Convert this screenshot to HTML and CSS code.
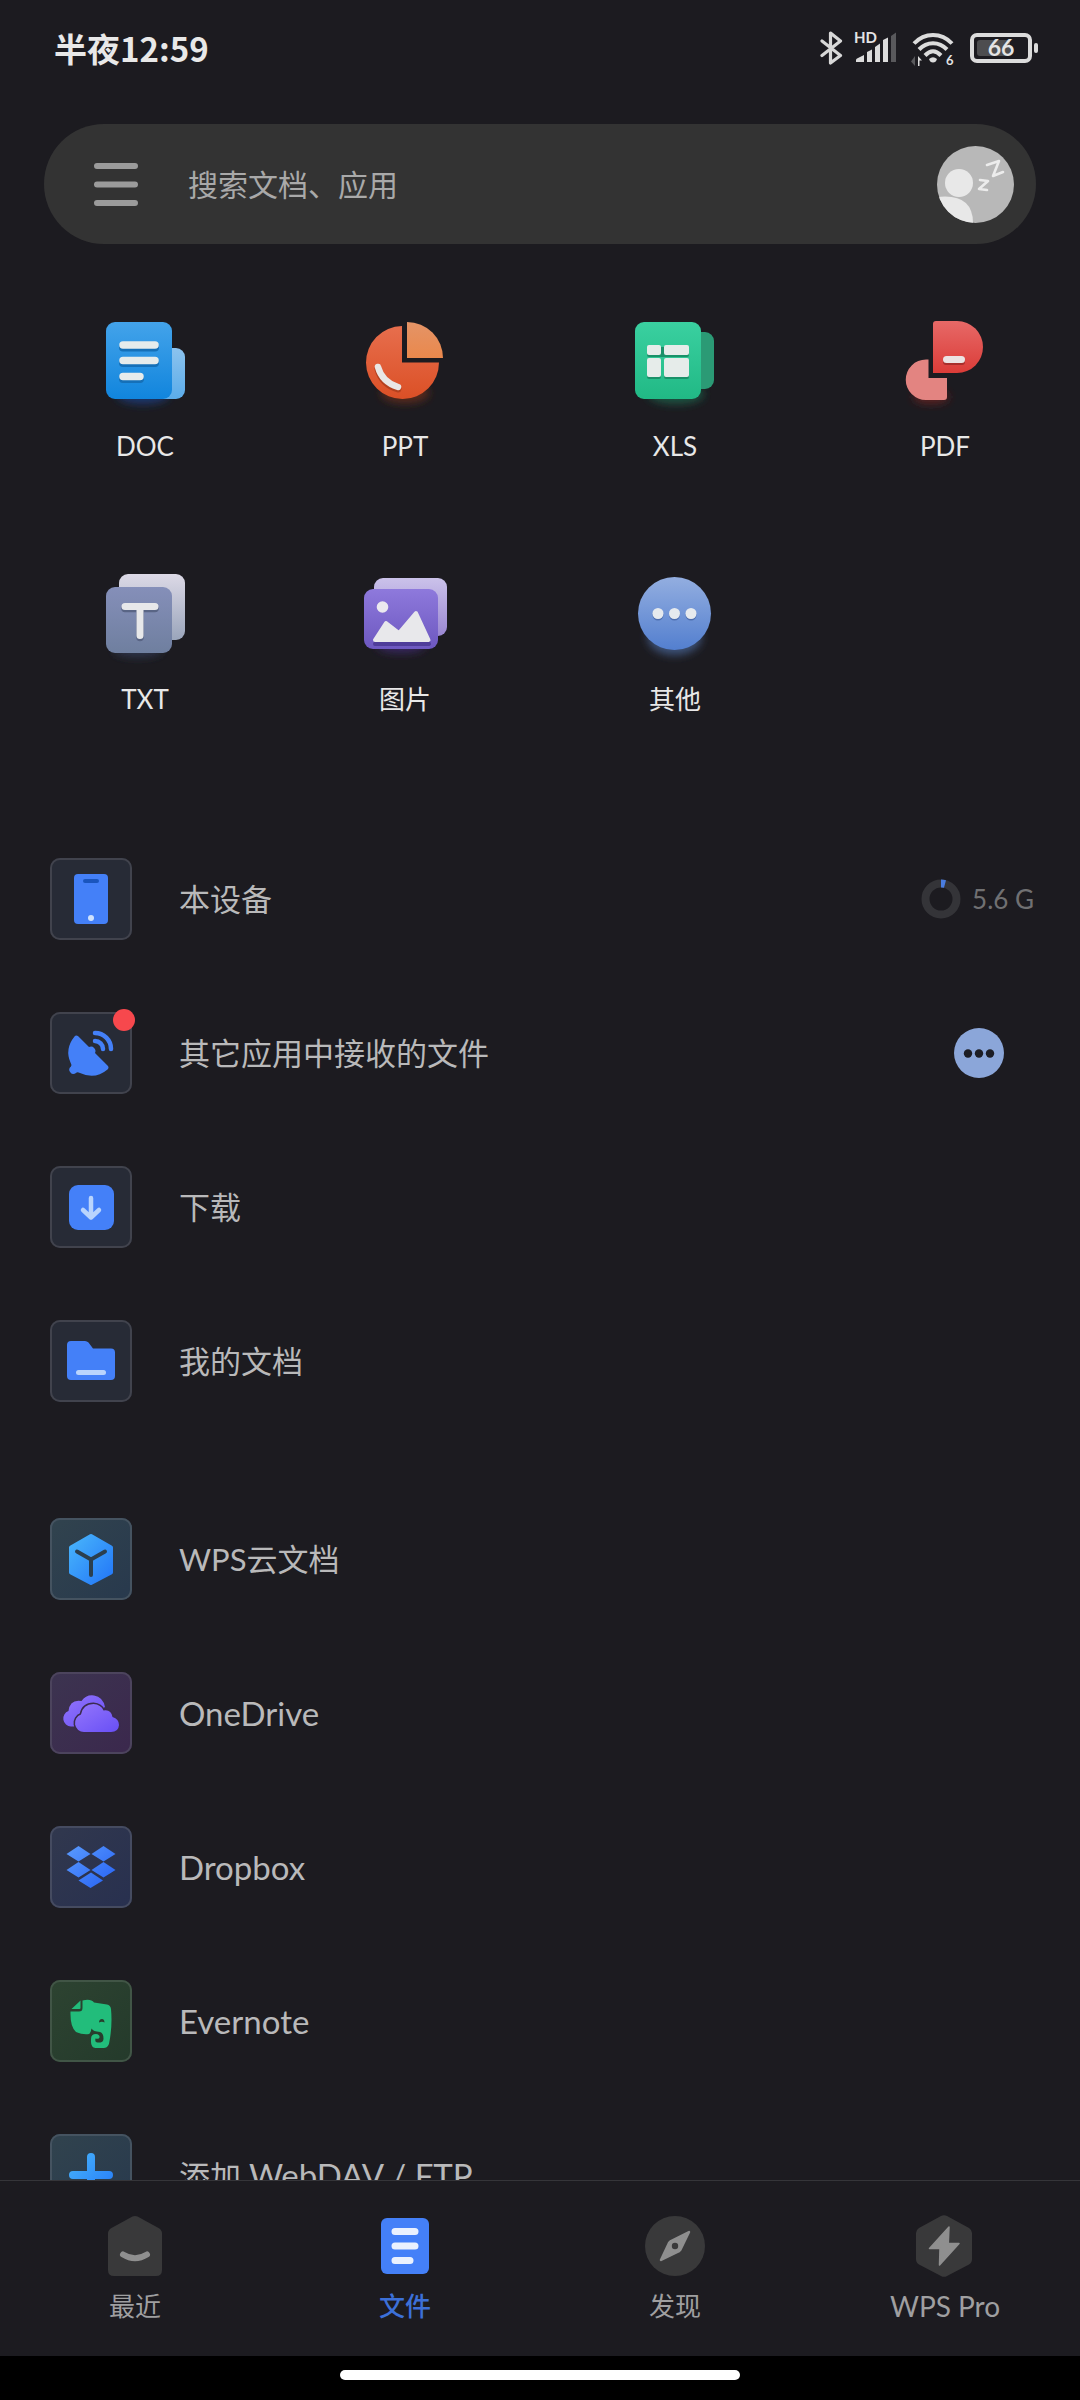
FILE: index.html
```html
<!DOCTYPE html>
<html lang="zh-CN">
<head>
<meta charset="utf-8">
<meta name="viewport" content="width=device-width, initial-scale=1">
<title>文件</title>
<link rel="stylesheet" href="styles.css">
</head>
<body>
<!-- 状态栏 -->
<header class="status">
  <span class="time">半夜12:59</span>
  <div class="status-icons">
    <svg class="bt" width="24" height="40" viewBox="0 0 24 40"><path d="M2 13 20.500 27.500 10.500 35V5L20.500 13 2 27.500" fill="none" stroke="#d8d8d8" stroke-width="3.200" stroke-linejoin="round" stroke-linecap="round"/></svg>
    <svg class="signal" width="46" height="40" viewBox="0 0 46 40">
      <path d="M4 34V32Q4 31 5 30.500L12 27V34zM15 34V24L20 21.500V34zM23 34V19L28 15.500V34zM31 34V12L36 9.500V34z" fill="#dcdcdc"/>
      <path d="M39 34V8L44 4.500V34z" fill="#59595c"/>
      <text x="2" y="15" font-size="15" class="svg-bold">HD</text>
    </svg>
    <svg class="wifi" width="46" height="40" viewBox="0 0 46 40">
      <g fill="none" stroke="#dcdcdc" stroke-width="4">
        <path d="M4 15.500Q12 7 23 7T42 15.500"/><path d="M9 21.500Q15 15.200 23 15.200T37 21.500"/><path d="M15 27.500Q19 23.300 23 23.300T31 27.500"/>
      </g>
      <path d="M19 31Q23 27.500 27 31Q26 34.500 23 34.500T19 31z" fill="#dcdcdc"/>
      <path d="M5 28V38L1 33.500" fill="#59595c"/><path d="M8 38V28L12 32.500H9.500V38z" fill="#dcdcdc"/>
      <text x="36" y="37" font-size="13" class="svg-bold">6</text>
    </svg>
    <svg class="battery" width="72" height="40" viewBox="0 0 72 40">
      <rect x="4" y="7" width="58" height="26" rx="5" fill="none" stroke="#dcdcdc" stroke-width="4"/>
      <rect x="9" y="12" width="33" height="16" rx="3" fill="#4d4d4f"/>
      <rect x="66" y="15" width="4" height="10" rx="2" fill="#dcdcdc"/>
      <text x="33" y="28" font-size="23" text-anchor="middle" class="svg-bold">66</text>
    </svg>
  </div>
</header>

<main class="page">
  <!-- 搜索 -->
  <form class="search">
    <button type="button" class="menu" aria-label="菜单">
      <svg width="48" height="48" viewBox="0 0 48 48"><path d="M5 6H43M5 24.500H43M5 43H43" stroke="#9b9b9b" stroke-width="6" stroke-linecap="round"/></svg>
    </button>
    <input type="search" aria-label="搜索" placeholder="搜索文档、应用">
    <button type="button" class="avatar" aria-label="账号">
      <svg width="77" height="77" viewBox="0 0 77 77">
        <defs><clipPath id="av"><circle cx="38.500" cy="38.500" r="38.500"/></clipPath></defs>
        <g clip-path="url(#av)">
          <rect width="77" height="77" fill="#b8b8b8"/>
          <circle cx="22" cy="37" r="14" fill="#e8e8e8"/>
          <path d="M0 51Q36 47 36 77H0z" fill="#e8e8e8"/>
          <path d="M50 19 62 15 56 30 66 26M43 34 51 35 42 43 50 44" fill="none" stroke="#ececec" stroke-width="2.600" stroke-linejoin="round" stroke-linecap="round"/>
        </g>
      </svg>
    </button>
  </form>

  <!-- 文件类型 -->
  <nav class="types">
    <a href="#">
      <svg width="100" height="100" viewBox="0 0 100 100">
        <defs>
          <filter id="glow" x="-50%" y="-50%" width="200%" height="200%"><feGaussianBlur stdDeviation="4"/></filter>
          <linearGradient id="doc" x1="0" y1="0" x2="0" y2="1"><stop offset="0" stop-color="#43a3ea"/><stop offset="1" stop-color="#1185dd"/></linearGradient>
          <linearGradient id="doc2" x1="0" y1="0" x2="0" y2="1"><stop offset="0" stop-color="#8cc3ee"/><stop offset="1" stop-color="#5bacea"/></linearGradient>
        </defs>
        <ellipse cx="48" cy="79" rx="26" ry="9" fill="#1b3970" filter="url(#glow)"/>
        <rect x="58" y="32" width="32" height="51" rx="9" fill="url(#doc2)"/>
        <rect x="11" y="6" width="66" height="77" rx="9" fill="url(#doc)"/>
        <path d="M28 30H60M28 45.500H60M28 61.500H45" transform="translate(0 1.500)" stroke="#1570b8" stroke-width="8" stroke-linecap="round"/>
        <path d="M28 29H60M28 44.500H60M28 60.500H45" stroke="#e6ecec" stroke-width="7.500" stroke-linecap="round"/>
      </svg>
      <span>DOC</span>
    </a>
    <a href="#">
      <svg width="100" height="100" viewBox="0 0 100 100">
        <defs>
          <linearGradient id="ppt" x1="0" y1="0" x2="0" y2="1"><stop offset="0" stop-color="#e76e4d"/><stop offset="1" stop-color="#db5026"/></linearGradient>
          <linearGradient id="ppt2" x1="0" y1="0" x2="0" y2="1"><stop offset="0" stop-color="#e49467"/><stop offset="1" stop-color="#ea884c"/></linearGradient>
        </defs>
        <ellipse cx="50" cy="77" rx="24" ry="10" fill="#5c2a1e" filter="url(#glow)"/>
        <path d="M47 46.500V10A36.500 36.500 0 1 0 84 46.500z" fill="url(#ppt)"/>
        <path d="M52 6A36 36 0 0 1 88 42H52z" fill="url(#ppt2)"/>
        <path d="M23 51Q27 66 43 71" transform="translate(0 2)" fill="none" stroke="#b4411f" stroke-width="7" stroke-linecap="round"/>
        <path d="M23 51Q27 66 43 71" fill="none" stroke="#e9e7e5" stroke-width="6.500" stroke-linecap="round"/>
      </svg>
      <span>PPT</span>
    </a>
    <a href="#">
      <svg width="100" height="100" viewBox="0 0 100 100">
        <defs><linearGradient id="xls" x1="0" y1="0" x2="0" y2="1"><stop offset="0" stop-color="#3ad0a0"/><stop offset="1" stop-color="#21b985"/></linearGradient></defs>
        <ellipse cx="51" cy="78" rx="28" ry="10" fill="#1d5543" filter="url(#glow)"/>
        <rect x="58" y="16" width="31" height="57" rx="9" fill="#2b9a75"/>
        <rect x="10" y="6" width="66" height="77" rx="9" fill="url(#xls)"/>
        <g fill="#1a9169"><rect x="22" y="43" width="14" height="20" rx="2"/><rect x="39" y="43" width="25" height="20" rx="2"/><rect x="22" y="31" width="42" height="10" rx="2"/></g>
        <g fill="#e6ecea"><rect x="22" y="29" width="14" height="10" rx="2"/><rect x="39" y="29" width="25" height="10" rx="2"/><rect x="22" y="42" width="14" height="19" rx="2"/><rect x="39" y="42" width="25" height="19" rx="2"/></g>
      </svg>
      <span>XLS</span>
    </a>
    <a href="#">
      <svg width="100" height="100" viewBox="0 0 100 100">
        <defs><linearGradient id="pdf" x1="0" y1="0" x2="0" y2="1"><stop offset="0" stop-color="#e76967"/><stop offset="1" stop-color="#db3c38"/></linearGradient></defs>
        <ellipse cx="36" cy="81" rx="18" ry="7" fill="#5c2022" filter="url(#glow)"/>
        <path d="M33.500 43.500V62H52V81Q52 84 49 84H31A20.200 20.200 0 0 1 31 43.500z" fill="#e38481"/>
        <path d="M41 5H62A26 26 0 0 1 62 57H38V8Q38 5 41 5z" fill="url(#pdf)"/>
        <rect x="48" y="42" width="22" height="7" rx="3" fill="#a92e2b"/>
        <rect x="48" y="40" width="22" height="7" rx="3.500" fill="#ece3e3"/>
      </svg>
      <span>PDF</span>
    </a>
    <a href="#">
      <svg width="100" height="100" viewBox="0 0 100 100">
        <defs>
          <linearGradient id="txt" x1="0" y1="0" x2="0" y2="1"><stop offset="0" stop-color="#858fb9"/><stop offset="1" stop-color="#6f7f9f"/></linearGradient>
          <linearGradient id="txt2" x1="0" y1="0" x2="0" y2="1"><stop offset="0" stop-color="#dcd9e6"/><stop offset="1" stop-color="#9aa5bb"/></linearGradient>
        </defs>
        <ellipse cx="43" cy="81" rx="24" ry="7" fill="#2d344c" filter="url(#glow)"/>
        <rect x="24" y="5" width="66" height="66" rx="9" fill="url(#txt2)"/>
        <rect x="11" y="18" width="66" height="66" rx="9" fill="url(#txt)"/>
        <path d="M30 39.500H60M45 39.500V68.500" stroke="#596585" stroke-width="7.500" stroke-linecap="round"/>
        <path d="M30 37.500H60M45 37.500V66.500" stroke="#e7e8ea" stroke-width="7" stroke-linecap="round"/>
      </svg>
      <span>TXT</span>
    </a>
    <a href="#">
      <svg width="100" height="100" viewBox="0 0 100 100">
        <defs>
          <linearGradient id="pic" x1="0" y1="0" x2="0" y2="1"><stop offset="0" stop-color="#8e79dc"/><stop offset="1" stop-color="#6d58c0"/></linearGradient>
          <linearGradient id="pic2" x1="0" y1="0" x2="0" y2="1"><stop offset="0" stop-color="#cbc2ea"/><stop offset="1" stop-color="#9a87d2"/></linearGradient>
        </defs>
        <ellipse cx="46" cy="77" rx="24" ry="7" fill="#37265f" filter="url(#glow)"/>
        <rect x="19" y="9" width="73" height="58" rx="9" fill="url(#pic2)"/>
        <rect x="9" y="20" width="74" height="60" rx="9" fill="url(#pic)"/>
        <path d="M20 73 31 54 44 65 61 45 74 73z" transform="translate(0 2)" fill="#4f3d9a" stroke="#4f3d9a" stroke-width="4" stroke-linejoin="round"/>
        <circle cx="27.500" cy="38" r="5.800" fill="#ebe9ef"/>
        <path d="M20 71 31 54 44 64 61 44 73.500 71z" fill="#e8e8eb" stroke="#e8e8eb" stroke-width="4" stroke-linejoin="round"/>
      </svg>
      <span>图片</span>
    </a>
    <a href="#">
      <svg width="100" height="100" viewBox="0 0 100 100">
        <defs><linearGradient id="other" x1="0" y1="0" x2="0" y2="1"><stop offset="0" stop-color="#93aee0"/><stop offset="1" stop-color="#537fcf"/></linearGradient></defs>
        <ellipse cx="49.500" cy="68" rx="27" ry="18" fill="#3e5279" filter="url(#glow)"/>
        <circle cx="49.500" cy="44.500" r="36.500" fill="url(#other)"/>
        <g fill="#4e6fb0"><circle cx="33" cy="46" r="5.500"/><circle cx="49.500" cy="46" r="5.500"/><circle cx="66" cy="46" r="5.500"/></g>
        <g fill="#e6eaee"><circle cx="33" cy="44.500" r="5.500"/><circle cx="49.500" cy="44.500" r="5.500"/><circle cx="66" cy="44.500" r="5.500"/></g>
      </svg>
      <span>其他</span>
    </a>
  </nav>

  <!-- 本地位置 -->
  <ul class="list">
    <li>
      <a href="#">
        <span class="tile"><svg viewBox="0 0 82 82"><rect x="24" y="16" width="34" height="50" rx="4" fill="#4480f8"/><rect x="33" y="21" width="16" height="4" rx="2" fill="#1a55bd"/><circle cx="41" cy="60" r="3" fill="#cfe2fd"/></svg></span>
        <span class="name">本设备</span>
      </a>
      <span class="storage">
        <svg width="40" height="40" viewBox="0 0 40 40"><circle cx="20" cy="20" r="15.500" fill="none" stroke="#343438" stroke-width="8"/><path d="M20 4.500A15.500 15.500 0 0 1 24 5" fill="none" stroke="#4a7de0" stroke-width="8"/></svg>
        5.6 G
      </span>
    </li>
    <li>
      <a href="#">
        <span class="tile">
          <svg viewBox="0 0 82 82">
            <path d="M24.500 24.500Q26 22.500 28.500 24.500L39 35A4.500 4.500 0 0 1 45 41L57.500 53.500Q59.500 55.500 57.500 57.500Q45 68 30 61Q27 59.500 26 61A4 4 0 1 1 21 54.500Q22 53 20.500 50.500Q14.500 37 24.500 24.500z" fill="#4480f8"/>
            <path d="M45 21A16 16 0 0 1 61 37M45 29A8 8 0 0 1 53 37" fill="none" stroke="#4480f8" stroke-width="4.500" stroke-linecap="round"/>
          </svg>
          <i class="badge"></i>
        </span>
        <span class="name">其它应用中接收的文件</span>
      </a>
      <button type="button" class="more" aria-label="更多">
        <svg width="50" height="50" viewBox="0 0 50 50"><circle cx="25" cy="25" r="25" fill="#8ba6d9"/><g fill="#1c1d24"><circle cx="14" cy="25.500" r="4.200"/><circle cx="25" cy="25.500" r="4.200"/><circle cx="36" cy="25.500" r="4.200"/></g></svg>
      </button>
    </li>
    <li>
      <a href="#">
        <span class="tile"><svg viewBox="0 0 82 82"><rect x="19" y="19" width="45" height="45" rx="9" fill="#4480f8"/><path d="M41 32V51M33 44 41 51.500 49 44" fill="none" stroke="#b9d4fd" stroke-width="4.500" stroke-linecap="round" stroke-linejoin="round"/></svg></span>
        <span class="name">下载</span>
      </a>
    </li>
    <li>
      <a href="#">
        <span class="tile"><svg viewBox="0 0 82 82"><path d="M21 21H35Q37 21 38.500 22.500L43 28.500H61Q65 28.500 65 32.500V56Q65 60 61 60H21Q17 60 17 56V25Q17 21 21 21z" fill="#4480f8"/><rect x="26" y="50" width="30" height="5" rx="2.500" fill="#b9d4fd"/></svg></span>
        <span class="name">我的文档</span>
      </a>
    </li>
  </ul>

  <!-- 云存储 -->
  <ul class="list cloud">
    <li>
      <a href="#">
        <span class="tile teal">
          <svg viewBox="0 0 82 82">
            <defs><linearGradient id="sky" x1="0" y1="0" x2="1" y2="1"><stop offset="0" stop-color="#48b5fb"/><stop offset="1" stop-color="#2377f8"/></linearGradient></defs>
            <path d="M41 18 61 29.500V54.500L41 65 21 54.500V29.500z" fill="url(#sky)" stroke="url(#sky)" stroke-width="4" stroke-linejoin="round"/>
            <path d="M27 33.500 41 41.500 55 33.500M41 41.500V57" fill="none" stroke="#2b3f4e" stroke-width="4" stroke-linecap="round"/>
          </svg>
        </span>
        <span class="name">WPS云文档</span>
      </a>
    </li>
    <li>
      <a href="#">
        <span class="tile purple">
          <svg viewBox="0 0 82 82">
            <defs><linearGradient id="one" x1="0" y1="0" x2="1" y2="1"><stop offset="0" stop-color="#9476fb"/><stop offset="1" stop-color="#684ff6"/></linearGradient></defs>
            <path d="M21 54.500A8 8 0 0 1 18.500 39Q20 27 31.500 29Q36 22.500 44 23.500Q53 25 55 35L36 48 24 54.500z" fill="url(#one)"/>
            <path d="M34 60A9 9 0 0 1 31 42.500Q33 32 43.500 32Q51 32.500 53.500 38.500Q61 37 62.500 45Q69 47 69 53Q68.500 60 61 60z" fill="url(#one)" stroke="#3b2b4e" stroke-width="3" paint-order="stroke"/>
          </svg>
        </span>
        <span class="name latin">OneDrive</span>
      </a>
    </li>
    <li>
      <a href="#">
        <span class="tile navy">
          <svg viewBox="0 0 82 82">
            <defs><linearGradient id="drop" gradientUnits="userSpaceOnUse" x1="20" y1="20" x2="56" y2="62"><stop offset="0" stop-color="#5898fd"/><stop offset="1" stop-color="#2a66f5"/></linearGradient></defs>
            <path d="M28.500 20 40.500 28 28.500 35.500 16.500 28zM53.500 20 65.500 28 53.500 35.500 41.500 28zM28.500 36 40.500 44 28.500 51.500 16.500 44zM53.500 36 65.500 44 53.500 51.500 41.500 44zM41 46.500 53 54.500 40.500 62 28.500 54.500z" fill="url(#drop)"/>
          </svg>
        </span>
        <span class="name latin">Dropbox</span>
      </a>
    </li>
    <li>
      <a href="#">
        <span class="tile green">
          <svg viewBox="0 0 82 82">
            <path d="M21.500 29 30.500 20.500V28Q30.500 29 29.500 29z" fill="#22bd7b"/>
            <path d="M32.500 20.500Q41 18.500 44 22.500L57 24.500Q60.500 25 61 29Q62.500 45 59.500 61Q59 67.500 54 68H45.500Q41 67.500 41 62V59Q41 54 46 54Q50 54.500 49.500 57.500Q49 59.500 45.500 58.500Q44.500 62.500 47.500 62.500H50.500Q53.500 62 53.500 58.500Q53.500 53 50 52Q43 51.500 41.500 48.500Q41 52.500 39 54Q33 55 26 52Q20 47 20.500 31.500H29Q32.500 31.500 32.500 28z" fill="#22bd7b"/>
            <path d="M49 42.500Q49 39 52 39Q54.500 39 54.500 42.500Q52 41 49 42.500z" fill="#27402d"/>
          </svg>
        </span>
        <span class="name latin">Evernote</span>
      </a>
    </li>
    <li>
      <a href="#">
        <span class="tile teal"><svg viewBox="0 0 82 82"><path d="M37 23A4 4 0 0 1 45 23V37H59A4 4 0 0 1 59 45H45V59A4 4 0 0 1 37 59V45H23A4 4 0 0 1 23 37H37z" fill="url(#sky)"/></svg></span>
        <span class="name">添加 <span class="latin">WebDAV / FTP</span></span>
      </a>
    </li>
  </ul>
</main>

<!-- 底部导航 -->
<nav class="tabs">
  <a href="#">
    <svg width="64" height="64" viewBox="0 0 64 64"><path d="M29.500 2.600Q32 1.400 34.500 2.600L55.500 14Q59 16 59 19.500V56Q59 62 53 62H11Q5 62 5 56V19.500Q5 16 8.500 14z" fill="#39393a"/><path d="M20 40.500Q32 48 44 40.500" fill="none" stroke="#8f8f8f" stroke-width="6" stroke-linecap="round"/></svg>
    <span>最近</span>
  </a>
  <a href="#" class="cur">
    <svg width="64" height="64" viewBox="0 0 64 64"><rect x="8" y="4" width="48" height="56" rx="6" fill="#4480f8"/><path d="M22 17.500H42M22 32H42M22 46.500H37" stroke="#eaf1fe" stroke-width="7" stroke-linecap="round"/></svg>
    <span>文件</span>
  </a>
  <a href="#">
    <svg width="64" height="64" viewBox="0 0 64 64"><circle cx="32" cy="32" r="30" fill="#39393a"/><path d="M46 18 37.500 35.500 35.500 37.500 18 46 26 29 28 27z" fill="#8f8f8f" stroke="#8f8f8f" stroke-width="2.500" stroke-linejoin="round"/><circle cx="32" cy="32" r="3.200" fill="#39393a"/></svg>
    <span>发现</span>
  </a>
  <a href="#">
    <svg width="64" height="64" viewBox="0 0 64 64"><path d="M28 2Q31 .300 34 2L56 14Q59 16 59 19V45Q59 48.500 56 50.500L34 62Q31 63.700 28 62L6 50.500Q3 48.500 3 45V19Q3 16 6 14z" fill="#39393a"/><path d="M36 13 35.300 29.500H46L26.500 51 27 34.500H16.500z" fill="#8f8f8f" stroke="#8f8f8f" stroke-width="1.500" stroke-linejoin="round"/></svg>
    <span class="latin">WPS Pro</span>
  </a>
</nav>
<div class="home"><i></i></div>
</body>
</html>
```

FILE: styles.css
```css
* { box-sizing: border-box; }
body, ul { margin: 0; padding: 0; }
li { list-style: none; }
a { color: inherit; text-decoration: none; }
button { padding: 0; border: 0; background: none; cursor: pointer; }
svg { display: block; flex: none; }

body {
	display: flex;
	flex-direction: column;
	height: 100vh;
	overflow: hidden;
	background: #1c1b20;
	color: #b9b9ba;
	font-family: Lato, "Noto Sans CJK SC", sans-serif;
}

/* 状态栏 */
.status { display: flex; flex: none; align-items: center; justify-content: space-between; height: 96px; padding: 0 40px 0 54px; }
.time { color: #e8e8e8; font: bold 33px/40px "Noto Sans CJK SC", sans-serif; }
.status-icons { display: flex; gap: 12px; }
.signal { margin-left: -4px; }
.svg-bold { fill: #e4e4e4; font-weight: bold; }

.page { flex: 1; min-height: 0; overflow: hidden; }

/* 搜索 */
.search { display: flex; align-items: center; gap: 48px; height: 120px; margin: 28px 44px 0; padding: 0 22px 0 48px; border-radius: 60px; background: #333333; }
.search input { flex: 1; min-width: 0; padding: 0; border: 0; outline: none; background: none; color: #e8e8e8; font: 30px/44px Lato, "Noto Sans CJK SC", sans-serif; }
.search input::placeholder { color: #a9a9a9; opacity: 1; }

/* 文件类型 */
.types { display: grid; grid-template-columns: repeat(4, 1fr); row-gap: 105px; margin-top: 72px; }
.types a { display: flex; flex-direction: column; align-items: center; gap: 12px; color: #e8e8e8; font-size: 26px; line-height: 36px; }
.types a:nth-child(4n+1) { padding-left: 20px; }

/* 列表 */
.list { margin-top: 105px; }
.list.cloud { margin-top: 44px; }
.list li { display: flex; align-items: center; height: 154px; padding: 0 46px 0 50px; }
.list li a { display: flex; flex: 1; align-items: center; gap: 47px; }
.name { font-size: 31px; line-height: 44px; }
.list .latin { font-size: 33px; }
.tile { position: relative; width: 82px; height: 82px; border-radius: 10px; background: #272b36; box-shadow: inset 0 0 0 2px #41434d; }
.tile.teal { background: linear-gradient(135deg, #31434e, #28394d); box-shadow: inset 0 0 0 2px #455360; }
.tile.purple { background: linear-gradient(135deg, #3c3450, #3b284d); box-shadow: inset 0 0 0 2px #4c445d; }
.tile.navy { background: linear-gradient(135deg, #31384e, #28304f); box-shadow: inset 0 0 0 2px #454b60; }
.tile.green { background: linear-gradient(135deg, #2d4331, #243a2b); box-shadow: inset 0 0 0 2px #415546; }
.badge { position: absolute; top: -3px; right: -3px; width: 22px; height: 22px; border-radius: 50%; background: #f7484d; }
.storage { display: flex; align-items: center; gap: 11px; color: #707072; font-size: 26px; line-height: 36px; }
.more { margin-right: 30px; }

/* 底部导航 */
.tabs { display: flex; flex: none; height: 176px; padding-top: 33px; border-top: 1px solid #353539; }
.tabs a { display: flex; flex: 1 1 0; flex-direction: column; align-items: center; gap: 10px; color: #9f9fa0; font-size: 26px; line-height: 36px; }
.tabs .latin { font-size: 28px; }
.tabs .cur { color: #3c70d8; font-weight: 500; }
.home { display: flex; flex: none; align-items: center; justify-content: center; height: 44px; padding-bottom: 6px; background: #000; }
.home i { width: 37%; height: 10px; border-radius: 5px; background: #fff; }
```
